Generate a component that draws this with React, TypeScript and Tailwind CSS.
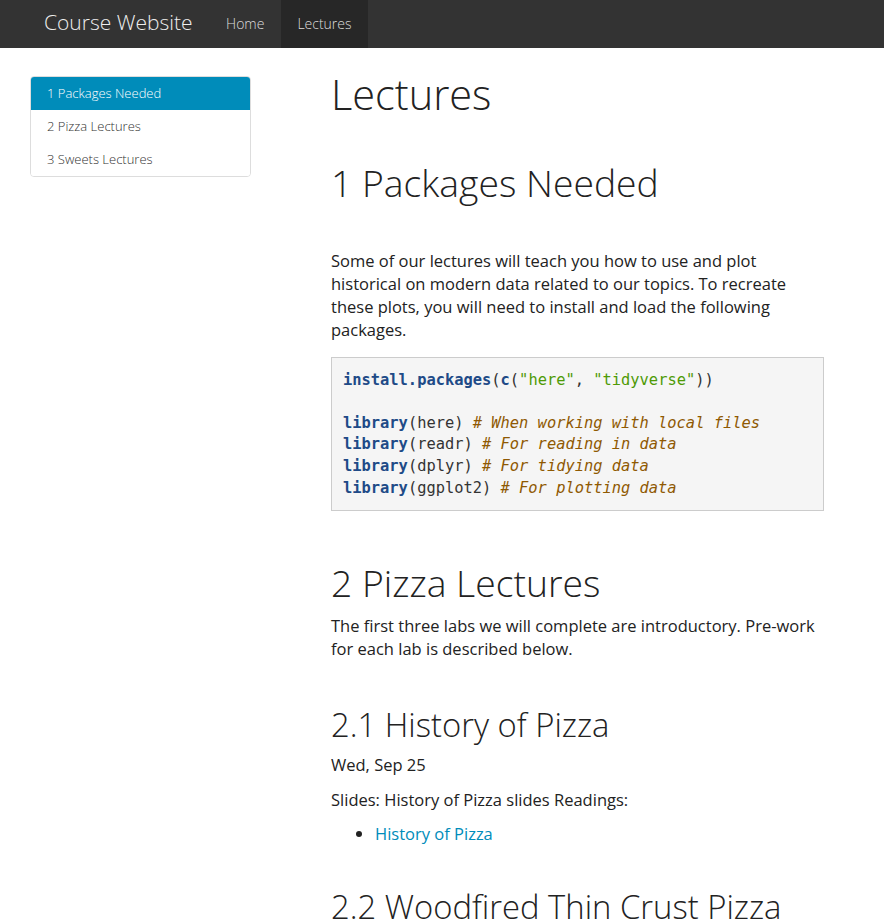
const sans = { fontFamily: '"Open Sans", "Liberation Sans", sans-serif' };

function Navbar() {
  return (
    <nav className="flex h-[48px] items-stretch bg-[#333333] pl-[44px]">
      <a className="flex items-center pr-[17px] pb-[3px] text-[21px] font-light text-[#eeeeee]">Course Website</a>
      <a className="flex items-center px-[16.5px] pb-[2px] text-[14px] font-light text-[#dddddd]">Home</a>
      <a className="flex items-center bg-[#272727] px-[16.5px] pb-[2px] text-[14px] font-light text-[#dddddd]">Lectures</a>
    </nav>
  );
}

function Toc() {
  const items = ["1 Packages Needed", "2 Pizza Lectures", "3 Sweets Lectures"];
  return (
    <div className="mt-[28px] w-[221px] shrink-0 self-start overflow-hidden rounded-[4px] border border-[#dddddd]">
      {items.map((item, i) => (
        <div
          key={item}
          className={
            i === 0
              ? "flex h-[33px] items-center bg-[#008cba] px-[16px] text-[13px] font-light text-white"
              : "flex h-[33px] items-center bg-white px-[16px] text-[13px] font-light text-[#333333]"
          }
        >
          {item}
        </div>
      ))}
    </div>
  );
}

function Code() {
  const fu = "font-bold text-[#204a87]";
  const st = "text-[#4e9a06]";
  const co = "italic text-[#8f5902]";
  return (
    <pre
      className="mt-[16px] border border-[#cccccc] bg-[#f5f5f5] px-[11px] pt-[12px] pb-[11px] text-[15.4px] leading-[21.6px] text-[#333333]"
      style={{ fontFamily: '"DejaVu Sans Mono", "Liberation Mono", monospace' }}
    >
      <span className={fu}>install.packages</span>(<span className={fu}>c</span>(<span className={st}>"here"</span>, <span className={st}>"tidyverse"</span>)){"\n"}
      {"\n"}
      <span className={fu}>library</span>(here) <span className={co}># When working with local files</span>{"\n"}
      <span className={fu}>library</span>(readr) <span className={co}># For reading in data</span>{"\n"}
      <span className={fu}>library</span>(dplyr) <span className={co}># For tidying data</span>{"\n"}
      <span className={fu}>library</span>(ggplot2) <span className={co}># For plotting data</span>
    </pre>
  );
}

export default function App() {
  return (
    <div className="h-[922px] overflow-hidden bg-white text-[#222222]" style={sans}>
      <Navbar />
      <div className="flex pl-[30px]">
        <Toc />
        <main className="ml-[80px] w-[493px] text-[16.5px] leading-[23px]">
          <h1 className="mt-[24px] text-[41.5px] font-light leading-[1.1]">Lectures</h1>
          <h1 className="mt-[44px] text-[37.3px] font-light leading-[1.1]">1 Packages Needed</h1>
          <p className="mt-[46px]">
            Some of our lectures will teach you how to use and plot historical on modern data related to our topics. To recreate these plots, you will need to install and load the following packages.
          </p>
          <Code />
          <h1 className="mt-[51px] text-[37.3px] font-light leading-[1.1]">2 Pizza Lectures</h1>
          <p className="mt-[11px]">
            The first three labs we will complete are introductory. Pre-work for each lab is described below.
          </p>
          <h2 className="mt-[47px] text-[32.8px] font-light leading-[1.1]">2.1 History of Pizza</h2>
          <p className="mt-[10px]">Wed, Sep 25</p>
          <p className="mt-[12px]">Slides: History of Pizza slides Readings:</p>
          <ul className="mt-[11px] list-disc pl-[44px]">
            <li>
              <a className="text-[#008cba]">History of Pizza</a>
            </li>
          </ul>
          <h2 className="mt-[44px] text-[32.8px] font-light leading-[1.1]">2.2 Woodfired Thin Crust Pizza</h2>
        </main>
      </div>
    </div>
  );
}
